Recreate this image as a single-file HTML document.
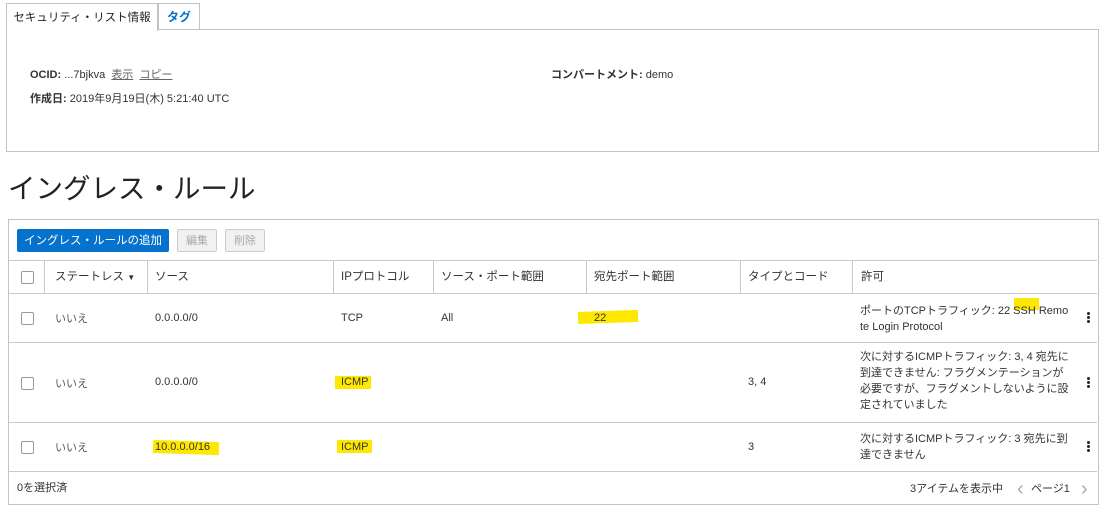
<!DOCTYPE html><html><head><meta charset="utf-8"><style>
body{margin:0;width:1102px;height:511px;background:#fff;font-family:"Liberation Sans","Noto Sans CJK JP",sans-serif;color:#333;font-size:11px;position:relative;overflow:hidden}
.a{position:absolute;white-space:nowrap;line-height:13px}
.cb{position:absolute;width:11px;height:11px;border:1px solid #999;border-radius:2px;background:#fff}
.hl{position:absolute;background:#ffe800}
.vl{position:absolute;width:1px;background:#c6cbd2}
.hr{position:absolute;height:1px;background:#c6cbd2}
.dots{position:absolute;width:3px}
.dots i{display:block;width:3px;height:3px;background:#222;border-radius:50%;margin-bottom:1px}
</style></head><body>
<div class="a" style="left:6px;top:3px;width:150px;height:27px;border:1px solid #bfc4cb;border-bottom:none;background:#fff;z-index:2;font-size:11.5px;color:#222;line-height:28px;text-align:center">セキュリティ・リスト情報</div>
<div class="a" style="left:158px;top:3px;width:40px;height:25px;border:1px solid #bfc4cb;border-bottom:none;background:#fff;font-size:12px;color:#0572ce;line-height:27px;text-align:center;font-weight:bold">タグ</div>
<div class="a" style="left:6px;top:29px;width:1091px;height:121px;border:1px solid #bfc4cb"></div>
<div class="a" style="left:30px;top:69px"><b>OCID:</b> ...7bjkva &nbsp;<span style="color:#666;text-decoration:underline">表示</span>&nbsp; <span style="color:#666;text-decoration:underline">コピー</span></div>
<div class="a" style="left:30px;top:93px"><b>作成日:</b> 2019年9月19日(木) 5:21:40 UTC</div>
<div class="a" style="left:551px;top:69px"><b>コンパートメント:</b> demo</div>
<div class="a" style="left:8px;top:173px;font-size:27.5px;line-height:32px;color:#222">イングレス・ルール</div>
<div class="a" style="left:8px;top:219px;width:1089px;height:284px;border:1px solid #bfc4cb"></div>
<div class="a" style="left:17px;top:229px;width:152px;height:23px;background:#0572ce;border-radius:2px;color:#fff;font-size:11.5px;line-height:24px;text-align:center">イングレス・ルールの追加</div>
<div class="a" style="left:177px;top:229px;width:38px;height:21px;border:1px solid #ccc;background:#f1f1f1;border-radius:2px;color:#aaa;line-height:22px;text-align:center">編集</div>
<div class="a" style="left:225px;top:229px;width:38px;height:21px;border:1px solid #ccc;background:#f1f1f1;border-radius:2px;color:#aaa;line-height:22px;text-align:center">削除</div>
<div class="hr" style="left:9px;top:260px;width:1088px"></div>
<div class="hr" style="left:9px;top:293px;width:1088px"></div>
<div class="hr" style="left:9px;top:342px;width:1088px"></div>
<div class="hr" style="left:9px;top:422px;width:1088px"></div>
<div class="hr" style="left:9px;top:471px;width:1088px"></div>
<div class="vl" style="left:852px;top:260px;height:33px"></div>
<div class="vl" style="left:740px;top:260px;height:33px"></div>
<div class="vl" style="left:586px;top:260px;height:33px"></div>
<div class="vl" style="left:433px;top:260px;height:33px"></div>
<div class="vl" style="left:333px;top:260px;height:33px"></div>
<div class="vl" style="left:147px;top:260px;height:33px"></div>
<div class="vl" style="left:44px;top:260px;height:33px"></div>
<div class="cb" style="left:21px;top:271px"></div>
<div class="a" style="left:55px;top:271px;font-size:11.5px">ステートレス <span style="font-size:8px">▼</span></div>
<div class="a" style="left:155px;top:271px;font-size:11.5px">ソース</div>
<div class="a" style="left:341px;top:271px;font-size:11.5px">IPプロトコル</div>
<div class="a" style="left:441px;top:271px;font-size:11.5px">ソース・ポート範囲</div>
<div class="a" style="left:594px;top:271px;font-size:11.5px">宛先ポート範囲</div>
<div class="a" style="left:748px;top:271px;font-size:11.5px">タイプとコード</div>
<div class="a" style="left:861px;top:271px;font-size:11.5px">許可</div>
<div class="hl" style="left:578px;top:311px;width:60px;height:12px;transform:rotate(-2deg)"></div>
<div class="hl" style="left:1014px;top:298px;width:25px;height:12px"></div>
<div class="hl" style="left:335px;top:376px;width:36px;height:13px"></div>
<div class="hl" style="left:153px;top:441px;width:66px;height:13px;transform:rotate(2deg)"></div>
<div class="hl" style="left:337px;top:440px;width:35px;height:13px"></div>
<div class="cb" style="left:21px;top:312px"></div>
<div class="a" style="left:55px;top:313px;color:#555">いいえ</div>
<div class="a" style="left:155px;top:312px">0.0.0.0/0</div>
<div class="a" style="left:341px;top:312px">TCP</div>
<div class="a" style="left:441px;top:312px">All</div>
<div class="a" style="left:594px;top:312px">22</div>
<div class="a" style="left:860px;top:303px;line-height:16px;white-space:normal;width:212px">ポートのTCPトラフィック: 22 SSH Remo te Login Protocol</div>
<div class="dots" style="left:1087px;top:312px"><i></i><i></i><i></i></div>
<div class="cb" style="left:21px;top:377px"></div>
<div class="a" style="left:55px;top:378px;color:#555">いいえ</div>
<div class="a" style="left:155px;top:376px">0.0.0.0/0</div>
<div class="a" style="left:341px;top:376px">ICMP</div>
<div class="a" style="left:748px;top:376px">3, 4</div>
<div class="a" style="left:860px;top:349px;line-height:16px;white-space:normal;width:212px">次に対するICMPトラフィック: 3, 4 宛先に到達できません: フラグメンテーションが必要ですが、フラグメントしないように設定されていました</div>
<div class="dots" style="left:1087px;top:377px"><i></i><i></i><i></i></div>
<div class="cb" style="left:21px;top:441px"></div>
<div class="a" style="left:55px;top:442px;color:#555">いいえ</div>
<div class="a" style="left:155px;top:441px">10.0.0.0/16</div>
<div class="a" style="left:341px;top:441px">ICMP</div>
<div class="a" style="left:748px;top:441px">3</div>
<div class="a" style="left:860px;top:431px;line-height:16px;white-space:normal;width:212px">次に対するICMPトラフィック: 3 宛先に到達できません</div>
<div class="dots" style="left:1087px;top:441px"><i></i><i></i><i></i></div>
<div class="a" style="left:17px;top:482px">0を選択済</div>
<div class="a" style="left:910px;top:483px">3アイテムを表示中</div>
<div class="a" style="left:1017px;top:478px;color:#aaa;font-size:20px;line-height:22px">‹</div>
<div class="a" style="left:1031px;top:483px">ページ1</div>
<div class="a" style="left:1081px;top:478px;color:#aaa;font-size:20px;line-height:22px">›</div>
</body></html>
